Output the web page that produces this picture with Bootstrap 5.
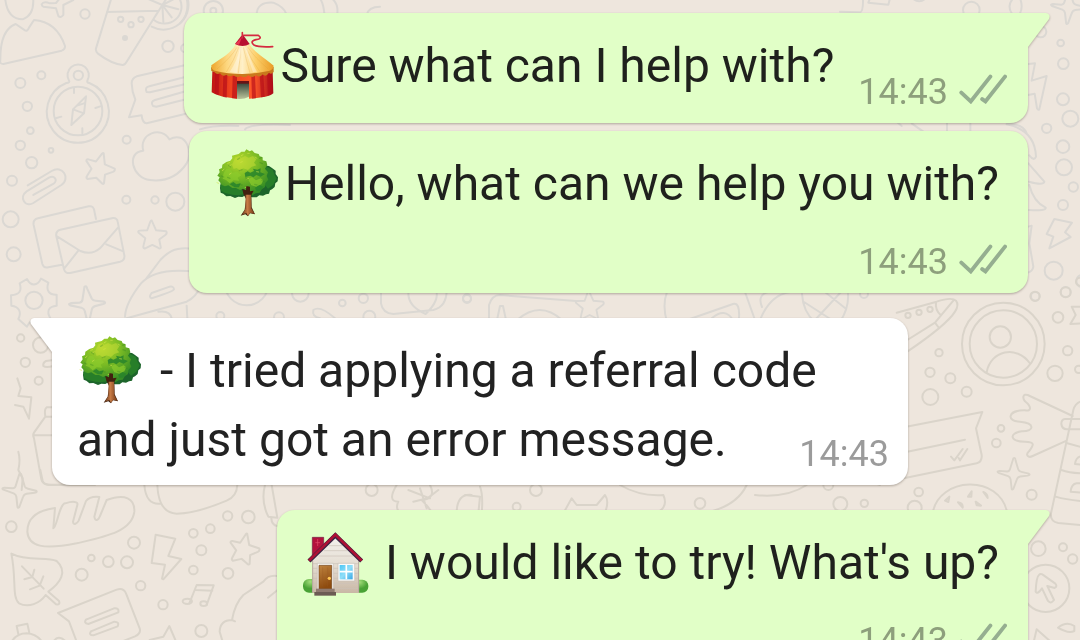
<!DOCTYPE html>
<html lang="en">
<head>
<meta charset="utf-8">
<meta name="viewport" content="width=device-width, initial-scale=1">
<title>Chat</title>
<link href="https://cdn.jsdelivr.net/npm/bootstrap@5.3.0/dist/css/bootstrap.min.css" rel="stylesheet">
<style>
  body { background: #eee6dd; font-family: Roboto, "Noto Sans", sans-serif; color: #1f211d; }
  .wallpaper { z-index: 0; fill: none; stroke: #dbd8d3; stroke-width: 6; stroke-linecap: round; stroke-linejoin: round; }
  .wallpaper .warm { stroke: #dad4ca; }
  .thread { z-index: 1; padding: 13px 52px 0; }
  .bubble { --fill: #e1ffc7; background: var(--fill); border-radius: 18px; padding: 18px 21px 13px 25px; filter: drop-shadow(0 1px 1px rgba(60, 50, 40, .36)); max-width: 88%; }
  .bubble-in { --fill: #fff; color: #222; padding: 18px 19px 11px 25px; max-width: 87.7%; }
  .tail-end { border-top-right-radius: 0; }
  .tail-start { border-top-left-radius: 0; }
  .tail { position: absolute; top: 0; width: 23px; height: 35px; fill: var(--fill); }
  .tail-end .tail { left: 100%; margin-left: -1px; }
  .tail-start .tail { right: 100%; margin-right: -1px; transform: scaleX(-1); }
  .message { font-size: 48px; line-height: 69px; }
  .stacked .message { padding-right: 8px; margin-bottom: 26px; }
  .beside .message { margin-bottom: 10px; }
  .emoji { width: 71px; height: 68px; vertical-align: -17px; }
  .stamp { font-size: 36px; line-height: 36px; color: #8d9f7c; }
  .bubble-in .stamp { margin-top: 31px; color: #9b9b9b; }
  .ticks { width: 48px; height: 30px; margin-left: 11px; fill: none; stroke: #95ae90; stroke-width: 12; stroke-linecap: round; stroke-linejoin: miter; }
  .same-sender { margin-top: 8px; }
  .new-sender { margin-top: 25px; }
</style>
</head>
<body class="vh-100 overflow-hidden position-relative">

<svg class="wallpaper position-absolute top-0 start-0 w-100 h-100" viewBox="0 0 1080 640" preserveAspectRatio="xMidYMin slice" aria-hidden="true">
  <defs>
    <path id="star" d="M0-48 14-17 46-14Q50-8 44-3L24 12 29 38Q27 43 20 38L2 29-22 41Q-28 39-26 32L-20 8-42-10Q-44-15-38-16L-14-17-4-45Q-2-49 0-48Z"/>
    <path id="spark" d="M-2-51Q4-55 5-44L14-14Q16-9 24-7L48-1Q54 3 44 5L20 8Q12 9 9 18L-2 48Q-8 54-8 44L-11 17Q-12 10-19 7L-50-4Q-57-9-47-10L-22-8Q-15-8-13-15Z"/>
    <path id="bolt" d="M-23-68 36-56 15-4 54 5 0 66-4 64 5 22-35 17Z"/>
  </defs>

  <!-- upper left -->
  <g transform="scale(.33333)">
    <path d="M15-10Q20 58 68 58 105 45 99-10M125 13Q130 3 150 10L168 9 182-8M220 0 190 15 190 45Q182 55 175 48L168 25 130 20Q125 18 125 13"/>
    <circle cx="255" cy="42" r="14"/>
    <path d="M10 192Q-2 192 1 180 0 90 47 72L75 91Q82 95 87 83L102 60Q170 65 195 138 196 148 185 152Z"/>
    <path d="M334-5 288 145Q286 154 294 161 335 192 368 195 375 195 380 185L474 35M321 36 475 32M455 80A75 75 0 0 0 563-5M462 60A51 51 0 0 0 538-5M487 15 440-5M487 15 535 28M487 15 515 52M487 15 490 65M487 15 465 50M487 15 500-5M487 15 520-2"/>
    <circle cx="362" cy="58" r="8"/><circle cx="393" cy="74" r="8"/><circle cx="423" cy="58" r="8"/><circle cx="375" cy="114" r="6" fill="#dbd8d3"/>
    <circle cx="504" cy="139" r="17"/><circle cx="555" cy="145" r="12"/>
    <circle cx="61" cy="249" r="15"/><circle cx="124" cy="226" r="12"/><circle cx="82" cy="319" r="14"/><circle cx="91" cy="392" r="10"/><circle cx="61" cy="436" r="14"/><circle cx="95" cy="488" r="17"/><circle cx="153" cy="451" r="7"/><circle cx="36" cy="542" r="15"/><circle cx="32" cy="658" r="24"/><circle cx="41" cy="763" r="21"/>
    <!-- compass -->
    <path d="M207 242A32 32 0 1 1 262 242Q260 248 268 249A93 93 0 1 1 199 249Q211 248 207 242"/>
    <circle cx="235" cy="226" r="14"/><circle cx="234" cy="333" r="73"/>
    <path d="M258 289 219 328 214 375 252 340ZM219 328 252 340M231 317 252 310M222 264V279M247 385V400M286 324 301 319M167 355 184 350"/>
    <!-- speech card -->
    <path d="M570 192 410 229Q395 235 395 250L398 275 406 299 387 352 425 346Q427 369 440 370L570 338M570 227 448 259Q433 262 440 276L450 277 570 249M570 270 465 300Q450 305 459 318L469 320 570 295"/>
    <path d="M430 452C415 400 485 377 508 418 560 390 580 460 560 490 530 535 490 545 450 540 395 534 378 455 430 452Z"/>
    <circle cx="380" cy="419" r="12"/><use href="#star" transform="translate(296 505) rotate(18)"/>
    <circle cx="379" cy="599" r="12"/><circle cx="465" cy="600" r="11"/><circle cx="526" cy="605" r="27"/>
    <use href="#star" transform="translate(455 707) scale(.95)"/>
    <!-- paper clip -->
    <path d="M83 556 155 513C187 493 213 535 184 555L100 609C76 623 55 592 80 574L147 533C163 524 175 541 161 551L100 585"/>
    <!-- envelopes -->
    <path d="M186 794 145 802Q131 805 127 792L101 675Q98 659 114 655L266 619Q281 616 283 633L288 657M181 689 339 654Q351 653 353 665L373 766Q375 781 360 785L214 818Q196 823 192 808L169 709Q166 693 181 689ZM171 709 241 753Q275 767 300 745L354 683M235 752 193 805M319 733 370 754"/>
    <path d="M59 850 81 837C92 859 112 859 123 836L145 848C137 872 148 885 170 884V917C145 919 139 934 151 955L123 978C112 958 91 955 81 980L55 957C65 938 59 920 34 917L33 886C60 883 66 872 59 850Z"/><circle cx="102" cy="901" r="26"/>
    <use href="#spark" transform="translate(263 913) rotate(-8) scale(1.05)"/>
    <path d="M575 746C520 740 500 760 481 780L437 838M375 950Q376 910 423 850 470 800 590 816M380 955 560 905Q590 890 600 860M455 879 509 860Q521 858 522 868 520 875 455 895 445 892 455 879M475 935Q510 930 515 955M560 917 562 955"/>
    <circle cx="740" cy="850" r="66"/><circle cx="901" cy="880" r="25"/><circle cx="1027" cy="909" r="10"/><circle cx="1090" cy="895" r="14"/><circle cx="1108" cy="950" r="18"/><circle cx="661" cy="948" r="12"/><circle cx="837" cy="952" r="15"/><circle cx="1401" cy="895" r="12"/>
    <path d="M1143 870V910Q1148 940 1180 942L1300 930Q1340 920 1340 870M1225 880Q1225 920 1277 942 1320 900 1308 870M1005 955Q960 915 940 930 935 950 960 955"/>
  </g>

  <!-- between the second and third bubbles -->
  <path stroke-width="2" d="M489 320V305Q492 295 500 295L576 301M497 320 500 306H503L506 320M517 320Q540 300 562 320M667 292Q662 305 667 322M687 320 733 304Q740 302 739 318M712 318Q725 307 733 320M745 292 755 320M760 320Q770 295 790 292M762 307Q757 295 768 292M802 294Q803 312 815 322M848 294Q849 308 840 322M804 302 835 322M825 292 845 308M841 292 815 320"/>
  <circle cx="467" cy="299" r="4" stroke-width="2"/><circle cx="864" cy="294" r="4" stroke-width="2"/>
  <use href="#star" transform="translate(589 306) scale(.31)"/>

  <!-- above and to the right of the first bubbles -->
  <g transform="translate(840 0) scale(.33333)">
    <circle cx="394" cy="30" r="25"/><path d="M515 40Q500 15 520-5M540-5Q550 20 540 40M0 35 60 37Q70 35 69-5M90-5 85 8 145 14 150-5M220-3Q238 10 255-3"/>
    <use href="#spark" transform="translate(686 22)"/><circle cx="602" cy="95" r="17"/><circle cx="662" cy="129" r="10"/><circle cx="670" cy="191" r="16"/>
    <path d="M560 193 585 190 575 242 620 228 598 328Q594 331 591 325L584 281 560 286"/>
    <circle cx="669" cy="298" r="18"/><circle cx="691" cy="356" r="24"/><circle cx="620" cy="385" r="14"/><circle cx="669" cy="440" r="19"/><circle cx="672" cy="502" r="24"/><circle cx="700" cy="561" r="14"/><circle cx="669" cy="615" r="15"/><circle cx="641" cy="812" r="27"/><circle cx="677" cy="876" r="15"/><circle cx="586" cy="889" r="13"/><circle cx="728" cy="843" r="19"/>
    <path d="M500 373Q585 390 588 470 582 485 568 466M565 490 613 545Q610 557 567 545M568 555Q580 605 617 623 620 633 567 630M565 680 575 677 568 730 580 800Q578 815 562 818M500 372Q550 370 560 400"/>
    <path d="M643 657 696 668 675 697 692 711 628 745 640 710 620 702Z"/>
    <path d="M321 370V395M391 370V395M215 370 250 395M170 365 185 378"/>
  </g>

  <!-- behind the top edge -->
  <g transform="translate(180 0) scale(.33333)"><circle cx="100" cy="32" r="29"/><circle cx="100" cy="32" r="9"/><path d="M20-5Q30 40 0 70M230 45Q230 5 280 8 310 20 318 40M420-5Q430 10 433 40M455-5Q475 10 472 40M560 45Q565 20 600 20M60 388Q100 375 175 378M195 388Q210 370 330 375"/></g>

  <!-- right side -->
  <g class="warm" transform="translate(900 280) scale(.33333)">
    <path d="M-10 98 110 65Q155 50 168 62 178 75 165 95 140 135 22 215M22 180 105 128 160 62M108 67Q105 90 122 105M105 128 117 144"/><circle cx="24" cy="106" r="8"/><circle cx="57" cy="97" r="8"/><circle cx="90" cy="88" r="8"/>
    <circle cx="310" cy="192" r="124"/><circle cx="310" cy="192" r="101"/><circle cx="301" cy="171" r="32"/><path d="M260 277C272 210 350 195 389 249"/>
    <circle cx="405" cy="49" r="14"/><circle cx="497" cy="37" r="15"/><circle cx="474" cy="112" r="16"/><circle cx="503" cy="212" r="14"/><circle cx="465" cy="280" r="23"/><circle cx="536" cy="268" r="11"/><circle cx="540" cy="5" r="12"/>
    <circle cx="117" cy="218" r="11"/><circle cx="90" cy="277" r="14"/><circle cx="151" cy="295" r="15"/><circle cx="91" cy="351" r="24"/><circle cx="200" cy="335" r="15"/>
    <path d="M545 80 515 80 527 105 511 132 545 130M15 441 247 396 228 445 245 525Q247 545 230 550L15 594M22 515 195 479M153 530 163 541 188 507M180 541 202 507M176 534 180 541"/>
    <path d="M518 408 383 345C370 340 366 353 375 364 395 380 395 395 375 391 320 390 320 425 360 425 405 428 405 455 365 454 325 460 330 485 375 485 408 485 400 497 387 514 375 525 385 535 398 528L500 482M550 363Q527 365 520 390L453 700Q450 725 475 729L550 736M550 417H495Q484 418 484 432 486 447 500 448H550M502 490 550 503M484 570Q510 580 550 580M467 650Q500 660 550 664M550 528Q528 528 525 552L550 554M550 610H530Q514 612 512 635L550 638"/>
    <circle cx="303" cy="445" r="10"/><circle cx="289" cy="489" r="13"/><use href="#spark" transform="translate(342 582) scale(.93)"/><circle cx="395" cy="644" r="15"/><circle cx="56" cy="636" r="13"/><circle cx="44" cy="683" r="21"/>
    <path d="M98 700C115 590 300 580 322 700M135 662 148 650 145 666ZM174 667Q190 670 188 683ZM204 650 215 634 214 650ZM250 636Q263 642 263 654ZM227 665 243 677 230 676ZM-75 610-60 615"/>
    <circle cx="415" cy="806" r="22"/><circle cx="489" cy="802" r="12"/><circle cx="518" cy="837" r="14"/><circle cx="437" cy="925" r="71"/>
    <path d="M417 885Q409 890 407 935 412 945 426 925L444 963Q452 973 462 960L442 918 464 924Q473 919 466 911L427 883Q421 880 417 885ZM474 1043Q500 1022 523 1038V1053Q505 1062 474 1043ZM400 1090 410 1048 452 1085"/>
  </g>

  <!-- lower left -->
  <g class="warm" transform="translate(0 470) scale(.33333)">
    <use href="#spark" transform="translate(60 63)"/><circle cx="34" cy="170" r="16"/>
    <path d="M160 175C170 175 178 100 196 100 220 92 235 95 232 105L219 155C220 168 232 160 236 152L258 93Q270 78 298 81L283 140C285 155 295 152 300 138L320 90C375 70 405 85 403 125 396 185 315 200 230 220 130 240 85 230 82 185 82 150 105 122 165 114Z"/>
    <path d="M34 251C80 275 140 260 170 273 205 305 180 340 145 365L177 393Q182 405 168 403L137 375C120 400 85 415 57 400 35 380 50 330 34 251M66 289 131 356M73 328 97 321 103 299M90 358 119 347 130 319"/>
    <circle cx="402" cy="218" r="18"/><circle cx="274" cy="264" r="10"/><circle cx="325" cy="275" r="16"/><circle cx="381" cy="277" r="18"/><circle cx="245" cy="314" r="18"/><circle cx="422" cy="347" r="14"/><circle cx="489" cy="404" r="14"/><circle cx="580" cy="190" r="13"/><circle cx="631" cy="176" r="13"/><circle cx="683" cy="138" r="14"/><circle cx="745" cy="141" r="19"/><circle cx="604" cy="241" r="15"/><circle cx="580" cy="300" r="13"/><circle cx="684" cy="310" r="16"/><circle cx="604" cy="483" r="18"/>
    <use href="#bolt" transform="translate(490 262)"/><use href="#star" transform="translate(730 238) rotate(14)"/>
    <path d="M174 429 350 359Q370 352 378 370L419 475Q424 490 405 499L370 513M174 429 207 454 230 515M258 449 342 415Q358 413 355 427L265 462Q250 460 258 449M273 484 343 455Q359 455 353 469L280 496Q265 495 273 484M35 515Q50 490 80 490 110 492 126 515M55 492 50 468 82 461 88 488M160 515Q175 493 196 513M449 510 490 500 508 468 526 510M568 400 590 345 641 346 620 405M587 360 637 362"/>
    <ellipse cx="562" cy="394" rx="14" ry="8"/><ellipse cx="611" cy="401" rx="10" ry="7"/>
    <path d="M121 0 128 33Q132 45 155 45H285M433 45Q438 105 480 101M472 45Q475 128 530 131 590 130 680 92 710 80 712 45M795 45Q782 95 805 140L832 143 815 45M814 145Q815 165 832 168M830 318Q805 315 790 335L730 375Q705 400 696 450 660 450 659 485L668 515M696 450 705 454M804 383 830 362"/>
    <path d="M1190 45Q1160 95 1195 95 1180 125 1220 135M1290 45Q1310 85 1265 90 1290 115 1300 135M1225 60 1290 85M1260 55 1280 115M1315 60 1282 85M1240 95 1282 85M1415 75Q1370 70 1370 130M1395 75 1440 80 1435 130M1440 50Q1450 75 1445 130M1690 130 1715 85 1730 105H1790L1815 75Q1830 95 1812 135M1860 45Q1920 80 1990 75 2010 120 1950 135M2240 45Q2210 110 2110 130M2265 75Q2360 85 2420 45"/>
    <circle cx="1115" cy="60" r="18"/><circle cx="1550" cy="110" r="12"/><circle cx="1608" cy="60" r="18"/><circle cx="2100" cy="100" r="16"/><circle cx="2521" cy="102" r="21"/><circle cx="2593" cy="100" r="11"/><circle cx="2485" cy="45" r="15"/>
  </g>

  <!-- left edge, beside the received message -->
  <g class="warm" transform="translate(20 310) scale(.33333)">
    <circle cx="62" cy="105" r="23"/><circle cx="16" cy="157" r="14"/><circle cx="56" cy="212" r="12"/><circle cx="2" cy="84" r="11"/>
    <path d="M100 150 78 153Q68 158 70 168 78 174 100 168M-8 205 2 235-5 258 34 262 27 326 10 290-15 285M100 292H80Q72 297 76 320L42 368Q37 375 42 385L64 508Q68 524 85 524H200M78 320H100M43 376H100M-5 425Q2 450-5 480L8 505 5 540"/>
  </g>
</svg>

<svg width="0" height="0" class="position-absolute" aria-hidden="true">
  <defs>
    <radialGradient id="leafLight" cx=".42" cy=".25" r=".75"><stop offset="0" stop-color="#b5d92d"/><stop offset=".5" stop-color="#79ba24"/><stop offset="1" stop-color="#358d25"/></radialGradient>
    <linearGradient id="bark"><stop stop-color="#68391d"/><stop offset=".45" stop-color="#c67a45"/><stop offset="1" stop-color="#6f3513"/></linearGradient>
    <symbol id="tree" viewBox="102 57 204 204" preserveAspectRatio="xMinYMid">
      <path fill="#1d652b" d="M247 111 259 107 267 108 276 114 287 122 287 132 294 142 293 154 286 160 284 171 276 178 270 181 267 191 258 193 249 197 238 196 230 202 215 202 198 195 187 201 175 200 165 204 151 198 139 199 130 191 122 188 120 174 122 160 140 154Z"/>
      <path fill="#277e29" d="M121 165 140 158 160 170 186 178 192 193 173 196 157 194 135 189 124 183ZM245 120 261 111 278 119 284 135 290 145 280 164 264 176 250 160Z"/>
      <path fill="url(#leafLight)" d="M115 151 119 142 112 137 119 127 117 118 126 114 127 104 139 96 151 92 157 85 156 77 167 74 176 72 184 65 194 65 199 58 209 64 216 61 224 69 236 72 239 79 248 82 248 91 259 94 262 106 255 116 264 127 260 138 265 149 256 159 255 171 245 178 239 188 227 190 217 196 206 185 189 176 180 180 168 174 157 174 145 166 135 169 125 165 120 157Z"/>
      <path fill="#c4dc36" opacity=".55" d="M156 104 166 82 178 78 184 84 195 78 206 83 219 78 229 88 222 98 229 106 214 111 204 120 189 115 181 122 170 114 161 117Z"/>
      <path fill="#8dcc2c" d="M131 129 139 116 151 118 158 128 171 124 184 136 173 143 178 152 161 151 149 160 138 150 128 146ZM204 148 216 142 228 151 242 145 250 151 244 163 229 170 214 166Z" opacity=".7"/>
      <path fill="#28842b" d="M194 129 203 124 211 128 222 123 219 116 232 119 242 115 241 127 255 132 242 140 229 135 220 142 211 137 196 141ZM149 163 160 156 169 163 182 160 177 172 164 172ZM225 173 239 165 250 170 240 182 229 182Z" opacity=".85"/>
      <path fill="none" stroke="#2f7f22" stroke-width="4" stroke-linecap="round" opacity=".3" d="m124 138 7 3m15-34 6 4m-9 31 7 3m28 18 8 2m11-22 7 5m-26-26 8-3m54-21 7 3m-1 50 6 3m-28 9 7 2m8-80 5-3m-71 6 6-4"/>
      <path fill="none" stroke="#d4e54b" stroke-width="3" stroke-linecap="round" opacity=".6" d="m127 122 5-4m11-18 6-2m35-21 5-3m14-4h5m17 11 6 4m-49 12 5-2m-38 13 4-4m77 21 6 1m-88 7 5-3m-42 28 5 2m85-13 5-2m-11 28 6-3"/>
      <path fill="#41210f" d="M187 177 198 181 199 168 210 170 210 184 221 182 214 195 215 232 225 253 210 250 204 259 196 253 182 257 194 239 198 207 190 191Z"/>
      <path fill="url(#bark)" d="M197 194 213 194 214 235 224 252 211 248 204 257 199 249 185 255 196 237Z"/>
    </symbol>
    <linearGradient id="tentRoof"><stop stop-color="#eda62c"/><stop offset=".25" stop-color="#fdd77f"/><stop offset=".5" stop-color="#fff0c8"/><stop offset=".72" stop-color="#fccf69"/><stop offset="1" stop-color="#e99b25"/></linearGradient>
    <linearGradient id="tentWall"><stop stop-color="#be1514"/><stop offset=".3" stop-color="#f04420"/><stop offset=".68" stop-color="#ff5a2a"/><stop offset="1" stop-color="#a90b18"/></linearGradient>
    <linearGradient id="tentDoor" x2="0" y2="1"><stop stop-color="#344238"/><stop offset="1" stop-color="#bac49a"/></linearGradient>
    <symbol id="tent" viewBox="87 93 204 204" preserveAspectRatio="xMinYMid">
      <path fill="url(#tentWall)" d="M97 214H278L280 280Q266 293 207 296V248H171V296Q115 291 95 277Z"/>
      <path fill="#b50d18" opacity=".65" d="M105 218 118 222 116 286 104 281ZM130 224H142L140 293 128 290ZM158 228H171V296L156 295ZM214 228H225L228 295 216 296ZM239 224H250L254 290 243 292ZM261 219H272L276 281 264 287Z"/>
      <path fill="url(#tentDoor)" d="M171 248H207V290Q190 299 171 296Z"/><path fill="#681416" d="M171 243H207V251H171Z"/>
      <path fill="#c9791d" d="M93 202 281 201V216Q273 225 267 218 257 233 248 223 239 235 228 225 217 236 205 226 194 237 182 228 170 236 160 225 149 233 139 224 128 232 120 220 110 225 103 216L94 213Z"/>
      <path fill="url(#tentRoof)" d="M167 133H208C220 154 251 171 281 197Q280 211 261 214 223 222 187 222 142 222 108 213 93 210 94 196C123 174 152 162 167 133Z"/>
      <path fill="none" stroke="#dc9a30" stroke-width="2" opacity=".35" d="M171 142Q153 172 111 207M176 142Q163 180 139 216M183 142Q179 182 175 220M190 142Q199 181 210 219M197 142Q212 178 240 215M204 142Q225 174 265 207"/>
      <path fill="#fff" opacity=".35" d="M180 143Q173 180 149 216L170 219Q178 184 186 143ZM194 142Q207 183 219 217L231 215Q210 180 200 142Z"/>
      <path fill="#b80f30" d="M184 107H191L209 132Q188 144 165 132Z"/><path fill="#e93751" d="M186 111 177 134 166 132Z"/>
      <path fill="none" stroke="#d52b40" stroke-width="5" stroke-linecap="round" stroke-linejoin="round" d="M187 98V113M191 106 235 106Q249 116 228 119 207 124 223 136 235 142 278 140"/>
    </symbol>
    <linearGradient id="houseWall" x2="0" y2="1"><stop stop-color="#f3f1ed"/><stop offset=".5" stop-color="#e5ddd2"/><stop offset="1" stop-color="#c9b7a5"/></linearGradient>
    <linearGradient id="houseDoor" x2=".3" y2="1"><stop stop-color="#bf8440"/><stop offset="1" stop-color="#8d4a0e"/></linearGradient>
    <linearGradient id="glass" x2="1" y2="1"><stop stop-color="#4cc6f5"/><stop offset=".5" stop-color="#90def8"/><stop offset="1" stop-color="#38a8e5"/></linearGradient>
    <radialGradient id="bush" cx=".45" cy=".2"><stop stop-color="#a2dc79"/><stop offset="1" stop-color="#49a235"/></radialGradient>
    <symbol id="house" viewBox="93 84 204 204" preserveAspectRatio="xMinYMid">
      <rect x="96" y="237" width="48" height="41" rx="18" fill="url(#bush)"/><rect x="244" y="239" width="48" height="39" rx="18" fill="url(#bush)"/>
      <path fill="#b3123c" stroke="#742044" stroke-width="2" d="M124 112H158V145L124 174Z"/><path stroke="#e4506d" stroke-width="2" d="M140 117V138M133 128H147"/>
      <path fill="url(#houseWall)" d="M193 112 264 179V279H124V179Z"/>
      <path fill="none" stroke="#cbc1b8" stroke-width="2" d="M174 137H214M159 152H229M143 168H246M126 191H262M126 205H262M126 220H262M126 235H262M126 250H262M126 265H262"/>
      <path fill="none" stroke="#b7a99e" stroke-width="3" d="M125 182V277M263 182V277"/>
      <path fill="none" stroke="#3c2443" stroke-width="13" d="m114 183 79-77 79 77"/><path fill="none" stroke="#ae1034" stroke-width="8" d="m114 182 79-78 79 78"/>
      <path fill="#fbfaf8" stroke="#c7c0b7" stroke-width="2" d="M139 190H187V268H139ZM201 190H251V243H201Z"/>
      <path fill="url(#houseDoor)" stroke="#704116" stroke-width="2" d="M144 196H182V267H144Z"/><path stroke="#985923" d="M155 202V260M170 202V260"/><circle cx="175" cy="235" r="5" fill="#ffc654"/>
      <path fill="url(#glass)" d="M206 195H245V238H206Z"/><path stroke="#fff" stroke-width="5" d="M226 195V238M206 215H245"/>
      <path fill="#8f7a70" d="M135 266H191V278H135Z"/><path fill="#6c5b54" d="M130 276H195V287H130Z"/>
    </symbol>
    <symbol id="ticks" viewBox="356 219 145 92"><path d="M362 276 391 303 451 227M426 296 436 303 496 227"/></symbol>
    <symbol id="tailShape" viewBox="0 0 23 35"><path d="M0 0H19Q24 1 22 6L1 34H0Z"/></symbol>
  </defs>
</svg>

<main class="thread position-relative d-flex flex-column">
  <article class="bubble tail-end beside position-relative align-self-end d-flex align-items-end">
    <svg class="tail" aria-hidden="true"><use href="#tailShape"/></svg>
    <p class="message"><svg class="emoji" role="img" aria-label="Circus tent"><use href="#tent"/></svg>Sure what can I help with?</p>
    <div class="stamp d-flex align-items-start ms-4"><time>14:43</time><svg class="ticks" aria-hidden="true"><use href="#ticks"/></svg></div>
  </article>

  <article class="bubble stacked same-sender position-relative align-self-end d-flex flex-column">
    <p class="message"><svg class="emoji" role="img" aria-label="Tree"><use href="#tree"/></svg>Hello, what can we help you with?</p>
    <div class="stamp d-flex align-items-start align-self-end"><time>14:43</time><svg class="ticks" aria-hidden="true"><use href="#ticks"/></svg></div>
  </article>

  <article class="bubble bubble-in tail-start new-sender position-relative align-self-start">
    <svg class="tail" aria-hidden="true"><use href="#tailShape"/></svg>
    <p class="message mb-0"><svg class="emoji" role="img" aria-label="Tree"><use href="#tree"/></svg> - I tried applying a referral code and just got an error message.<time class="stamp float-end">14:43</time></p>
  </article>

  <article class="bubble tail-end stacked new-sender position-relative align-self-end d-flex flex-column">
    <svg class="tail" aria-hidden="true"><use href="#tailShape"/></svg>
    <p class="message"><svg class="emoji" role="img" aria-label="House"><use href="#house"/></svg> I would like to try! What's up?</p>
    <div class="stamp d-flex align-items-start align-self-end"><time>14:43</time><svg class="ticks" aria-hidden="true"><use href="#ticks"/></svg></div>
  </article>
</main>

<script src="https://cdn.jsdelivr.net/npm/bootstrap@5.3.0/dist/js/bootstrap.bundle.min.js"></script>
</body>
</html>
